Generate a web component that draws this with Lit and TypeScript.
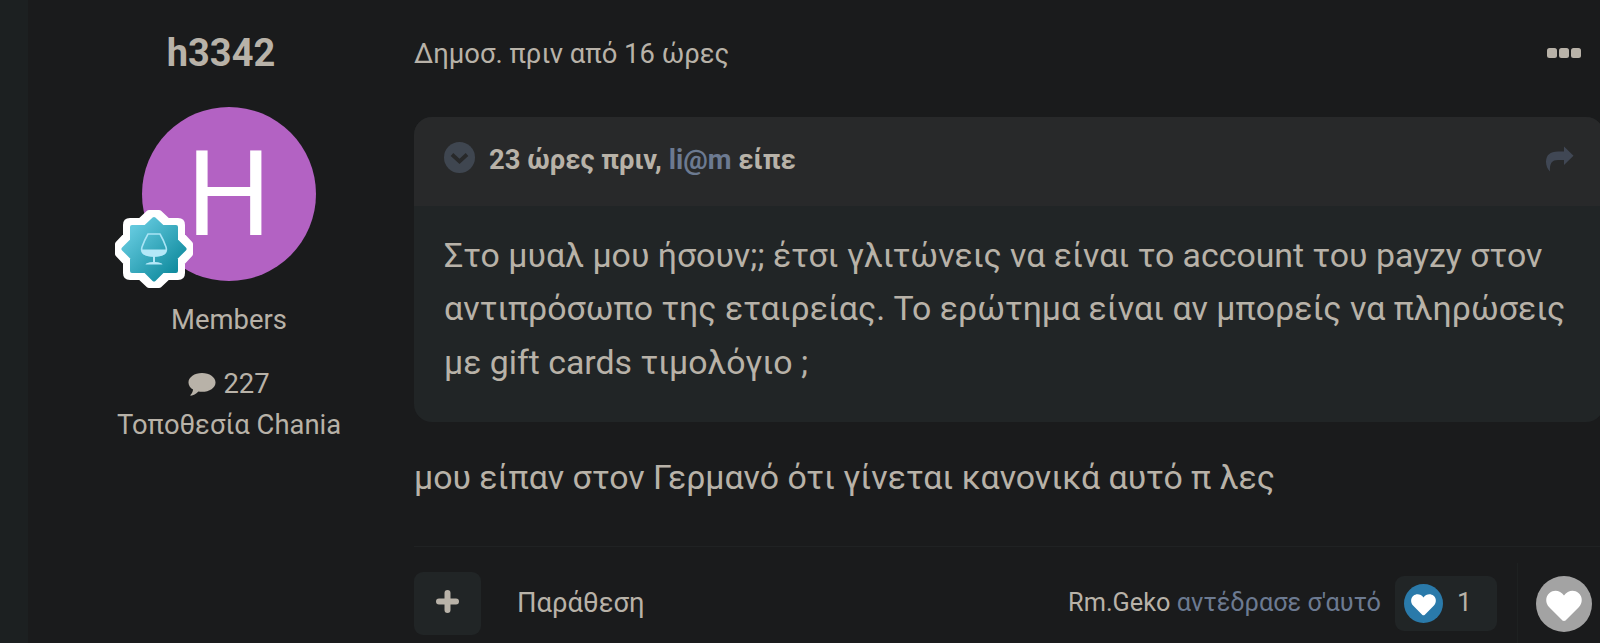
import { LitElement, html, css } from 'lit';
import { customElement, property } from 'lit/decorators.js';

@customElement('rank-badge')
export class RankBadge extends LitElement {
  static styles = css`
    :host {
      display: block;
      width: 78px;
      height: 78px;
    }
    svg {
      display: block;
      width: 100%;
      height: 100%;
    }
  `;

  render() {
    return html`
      <svg viewBox="0 0 78 78">
        <defs>
          <linearGradient id="fill" x1="0" y1="0" x2="1" y2="1">
            <stop offset="0.15" stop-color="#62c8dd" />
            <stop offset="0.85" stop-color="#128da0" />
          </linearGradient>
        </defs>
        <path
          d="M34 3 H44 L52.5 11 H63 Q67 11 67 15 V25.5 L75 34 V44 L67 52.5 V63 Q67 67 63 67 H52.5 L44 75 H34 L25.5 67 H15 Q11 67 11 63 V52.5 L3 44 V34 L11 25.5 V15 Q11 11 15 11 H25.5 Z"
          fill="#fff" stroke="#fff" stroke-width="6" stroke-linejoin="round" />
        <path
          d="M39 9 L47.5 17 H61 V30.5 L69.5 39 L61 47.5 V61 H47.5 L39 69.5 L30.5 61 H17 V47.5 L8.5 39 L17 30.5 V17 H30.5 Z"
          fill="url(#fill)" stroke="url(#fill)" stroke-width="4" stroke-linejoin="round" />
        <path d="M33 24 H45 Q49 31 51 37 C53 44 47 46 39 46 C31 46 25 44 27 37 Q29 31 33 24 Z"
          fill="none" stroke="#a9e4f5" stroke-width="1.6" stroke-linejoin="round" />
        <path d="M26.5 39.5 H51.5 C51.5 45 46 46.7 39 46.7 C32 46.7 26.5 45 26.5 39.5 Z" fill="#b4e8f8" />
        <path d="M38 46 H40 V52 Q47 52.5 47.5 54.5 H30.5 Q31 52.5 38 52 Z" fill="#b4e8f8" />
      </svg>
    `;
  }
}

@customElement('heart-icon')
export class HeartIcon extends LitElement {
  static styles = css`
    :host {
      display: block;
      flex: none;
    }
    svg {
      display: block;
      width: 100%;
      height: 100%;
    }
  `;

  @property() color = '#2a7aaa';

  render() {
    return html`
      <svg viewBox="0 0 56 56">
        <circle cx="28" cy="28" r="28" fill=${this.color} />
        <path
          d="M28 45 C26.8 45 26 44 25 43 L13 31 C9.5 27.5 9 20.5 13.5 17 C18 13.2 24.5 14.5 28 19.5 C31.5 14.5 38 13.2 42.5 17 C47 20.5 46.5 27.5 43 31 L31 43 C30 44 29.2 45 28 45 Z"
          fill="#fff" />
      </svg>
    `;
  }
}

@customElement('app-root')
export class AppRoot extends LitElement {
  static styles = css`
    :host {
      display: flex;
      width: 1600px;
      height: 643px;
      overflow: hidden;
      background: #1a1b1c;
      color: #b8b2a8;
      font-family: Roboto, sans-serif;
      font-size: 27.4px;
      white-space: nowrap;
    }
    .gutter {
      flex: none;
      width: 28px;
      background: #1c2021;
    }
    .author {
      flex: none;
      display: flex;
      flex-direction: column;
      align-items: center;
      width: 386px;
      box-sizing: border-box;
      padding: 29px 0 0 16px;
    }
    .name {
      margin: 0 16px 0 0;
      font-size: 38px;
      line-height: 48px;
      font-weight: 700;
    }
    .avatar {
      position: relative;
      width: 174px;
      height: 174px;
      margin-top: 30px;
      border-radius: 50%;
      background: #b362c3;
      color: #fff;
      font-size: 119px;
      line-height: 174px;
      text-align: center;
    }
    .letter {
      display: block;
      padding-top: 1px;
    }
    rank-badge {
      position: absolute;
      left: -27px;
      bottom: -7px;
    }
    .group {
      margin-top: 18px;
      line-height: 42px;
    }
    .stats {
      display: flex;
      align-items: center;
      gap: 7px;
      margin-top: 22px;
      line-height: 42px;
    }
    .location {
      line-height: 41px;
    }
    .comment {
      width: 28px;
      height: 25px;
    }
    .post {
      flex: none;
      width: 1190px;
      display: flex;
      flex-direction: column;
    }
    .top {
      display: flex;
      align-items: center;
      justify-content: space-between;
      height: 107px;
      padding-right: 23px;
      margin-bottom: 10px;
    }
    .date {
      padding-top: 1px;
    }
    .dots {
      width: 34px;
      height: 10px;
    }
    .quote {
      flex: none;
      border-radius: 18px;
      overflow: hidden;
      background: #212526;
    }
    .quote-head {
      display: flex;
      align-items: center;
      height: 89px;
      padding: 0 30px 0 30px;
      background: #28292a;
      font-weight: 700;
    }
    .chevron {
      width: 31px;
      height: 31px;
      margin: -8px 14px 0 0;
    }
    .cite {
      flex: 1;
      margin-top: -2px;
    }
    .link {
      color: #6c7a91;
    }
    .share {
      width: 29px;
      height: 26px;
      margin-top: -4px;
    }
    .quote-text {
      padding: 23px 30px 32px;
      font-size: 33.84px;
      line-height: 53.8px;
    }
    .body {
      margin-top: 29px;
      font-size: 33.84px;
      line-height: 54px;
    }
    .controls {
      display: flex;
      align-items: flex-start;
      height: 96px;
      margin-top: 41px;
      border-top: 1px solid #202223;
    }
    .add {
      display: flex;
      align-items: center;
      justify-content: center;
      width: 67px;
      height: 63px;
      margin-top: 25px;
      border-radius: 9px;
      background: #212526;
    }
    .plus {
      width: 23px;
      height: 23px;
      margin-top: -5px;
    }
    .quote-link {
      margin: 35px 0 0 36px;
      line-height: 42px;
    }
    .reacted {
      margin: 35px 14px 0 auto;
      font-size: 25.3px;
      line-height: 42px;
    }
    .count {
      display: flex;
      align-items: center;
      width: 102px;
      height: 55px;
      box-sizing: border-box;
      margin: 29px 20px 0 0;
      padding-left: 9px;
      gap: 14px;
      border-radius: 9px;
      background: #212526;
      font-size: 26.4px;
    }
    .count heart-icon {
      width: 39px;
      height: 39px;
    }
    .number {
      margin-top: -3px;
    }
    .react {
      height: 80px;
      margin: 16px 12px 0 0;
      padding: 13px 0 0 18px;
      border-left: 1px solid #1e2121;
      box-sizing: border-box;
    }
    .react heart-icon {
      width: 56px;
      height: 56px;
    }
  `;

  render() {
    return html`
      <div class="gutter"></div>
      <aside class="author">
        <h3 class="name">h3342</h3>
        <div class="avatar">
          <span class="letter">H</span>
          <rank-badge></rank-badge>
        </div>
        <div class="group">Members</div>
        <div class="stats">
          <svg class="comment" viewBox="0 0 29 25">
            <path
              d="M14.5 0.5 C22.3 0.5 28.5 4.8 28.5 10.3 C28.5 15.8 22.3 20.1 14.5 20.1 C13.2 20.1 12 20 10.8 19.8 C8 22.3 5.5 23.8 3 24.2 C2.3 24.2 2.4 23.4 2.9 22.9 C4.3 21.5 5 20 5.2 17.8 C2.3 16 0.5 13.3 0.5 10.3 C0.5 4.8 6.7 0.5 14.5 0.5 Z"
              fill="#b8b2a8" />
          </svg>
          <span>227</span>
        </div>
        <div class="location">Τοποθεσία Chania</div>
      </aside>
      <main class="post">
        <div class="top">
          <span class="date">Δημοσ. πριν από 16 ώρες</span>
          <svg class="dots" viewBox="0 0 34 10">
            <rect x="0" width="10" height="10" rx="2.5" fill="#b8b2a8" />
            <rect x="12" width="10" height="10" rx="2.5" fill="#b8b2a8" />
            <rect x="24" width="10" height="10" rx="2.5" fill="#b8b2a8" />
          </svg>
        </div>
        <div class="quote">
          <div class="quote-head">
            <svg class="chevron" viewBox="0 0 31 31">
              <circle cx="15.5" cy="15.5" r="15.5" fill="#3f4650" />
              <path d="M8 12.5 L15.5 19.5 L23 12.5" fill="none" stroke="#28292a" stroke-width="3.8" />
            </svg>
            <span class="cite">23 ώρες πριν, <span class="link">li@m</span> είπε</span>
            <svg class="share" viewBox="0 0 29 26">
              <path
                d="M19 0.5 L28.5 9.8 L19 19 V14 H13 C7 14 4.5 17 5 25.5 C2.5 23 1 19.5 1 16 C1 9 5 5.5 13 5.5 H19 Z"
                fill="#404754" />
            </svg>
          </div>
          <div class="quote-text">
            Στο μυαλ μου ήσουν;; έτσι γλιτώνεις να είναι το account του payzy στον<br />
            αντιπρόσωπο της εταιρείας. Το ερώτημα είναι αν μπορείς να πληρώσεις<br />
            με gift cards τιμολόγιο ;
          </div>
        </div>
        <div class="body">μου είπαν στον Γερμανό ότι γίνεται κανονικά αυτό π λες</div>
        <div class="controls">
          <div class="add">
            <svg class="plus" viewBox="0 0 23 23">
              <path d="M11.5 3 V20 M3 11.5 H20" stroke="#b8b2a8" stroke-width="6" stroke-linecap="round" />
            </svg>
          </div>
          <span class="quote-link">Παράθεση</span>
          <span class="reacted">Rm.Geko <span class="link">αντέδρασε σ'αυτό</span></span>
          <div class="count">
            <heart-icon></heart-icon>
            <span class="number">1</span>
          </div>
          <div class="react">
            <heart-icon color="#a3a3a3"></heart-icon>
          </div>
        </div>
      </main>
    `;
  }
}
